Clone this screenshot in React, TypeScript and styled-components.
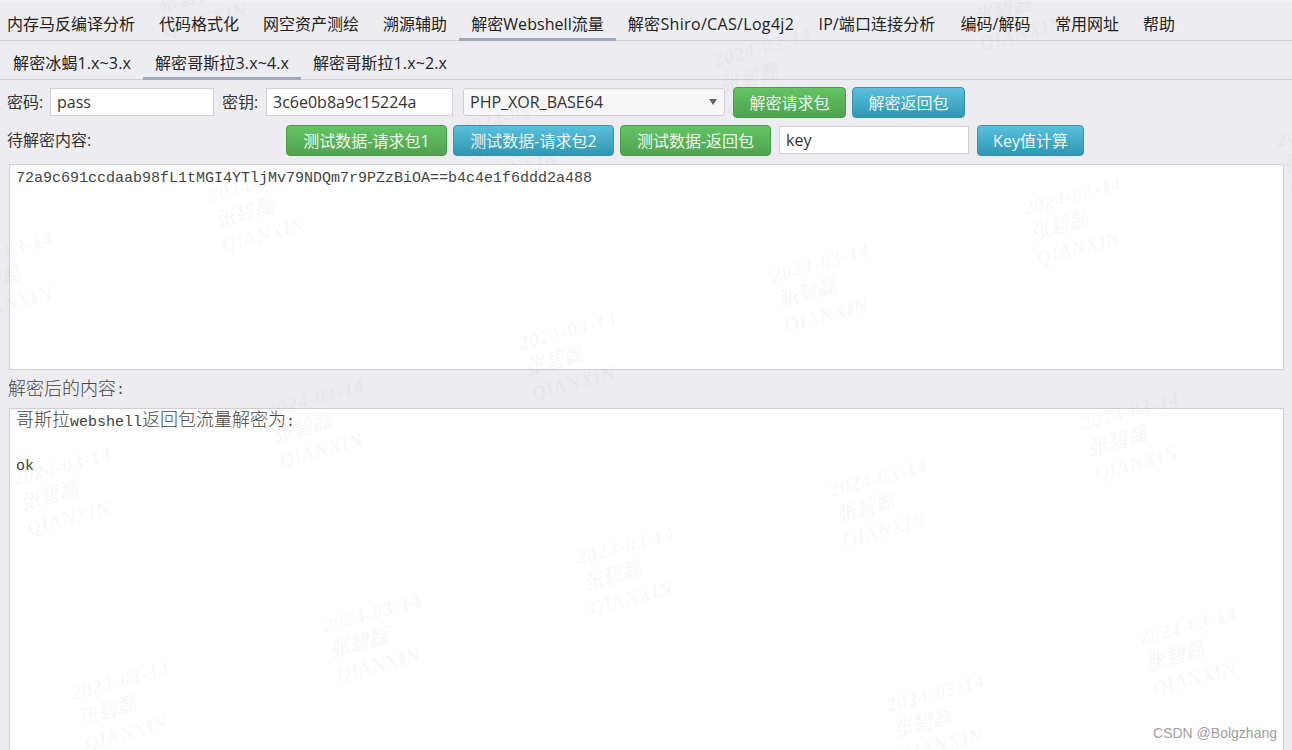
import React from "react";
import styled, { createGlobalStyle } from "styled-components";

const Global = createGlobalStyle`
  html, body { margin: 0; padding: 0; width: 1292px; height: 750px; overflow: hidden; background: #edecf1; }
  * { box-sizing: border-box; }
`;

const sans = `"Open Sans", "Noto Sans CJK SC", sans-serif`;
const mono = `"Liberation Mono", "Noto Sans CJK SC", monospace`;

const Page = styled.div`
  position: relative;
  width: 1292px;
  height: 750px;
  overflow: hidden;
  background: #edecf1;
  font-family: ${sans};
  color: #222;
  font-size: 16px;
`;

const TabBar = styled.div<{ $h: number; $pl: number }>`
  display: flex;
  height: ${(p) => p.$h}px;
  padding-left: ${(p) => p.$pl}px;
  border-bottom: 1px solid #cfcfd2;
`;
const MainBar = styled(TabBar)`
  border-top: 2px solid #f1f1f4;
`;

const Tab = styled.div<{ $active?: boolean; $w: number; $ls?: number; $pr?: number }>`
  width: ${(p) => p.$w}px;
  flex: none;
  display: flex;
  align-items: center;
  justify-content: center;
  padding: 5px ${(p) => p.$pr ?? 0}px 0 0;
  margin-bottom: -1px;
  white-space: nowrap;
  font-size: 16px;
  letter-spacing: ${(p) => p.$ls ?? 0}px;
  border-bottom: 3px solid ${(p) => (p.$active ? "#9eaabc" : "transparent")};
`;

const Content = styled.div`
  padding: 7px 8px 0 7px;
`;

const Row = styled.div`
  display: flex;
  align-items: flex-start;
  height: 31px;
`;
const SecondRow = styled(Row)`
  margin-top: 7px;
`;

const Label = styled.span<{ $w: number; $ml?: number }>`
  width: ${(p) => p.$w}px;
  margin-left: ${(p) => p.$ml ?? 0}px;
  flex: none;
  font-size: 16px;
  line-height: 30px;
  color: #333;
  white-space: nowrap;
`;

const Field = styled.div<{ $w: number; $ml?: number }>`
  width: ${(p) => p.$w}px;
  margin-left: ${(p) => p.$ml ?? 0}px;
  margin-top: 1px;
  height: 28px;
  flex: none;
  padding: 0 6px;
  display: flex;
  align-items: center;
  background: #fff;
  border: 1px solid #d0d0d2;
  font-size: 16px;
  color: #333;
`;

const Select = styled(Field)`
  background: #f6f6f7;
  border-radius: 3px;
  justify-content: space-between;
`;

const Caret = styled.span`
  width: 0;
  height: 0;
  border-left: 4.5px solid transparent;
  border-right: 4.5px solid transparent;
  border-top: 6px solid #666;
  margin-right: 1px;
`;

const Btn = styled.button<{ $kind: "green" | "blue"; $w: number; $ml?: number }>`
  width: ${(p) => p.$w}px;
  height: 31px;
  margin-left: ${(p) => p.$ml ?? 0}px;
  flex: none;
  padding: 0 0 2px;
  border-radius: 4px;
  font-family: ${sans};
  font-size: 16px;
  color: #eef8ef;
  white-space: nowrap;
  border: 1px solid ${(p) => (p.$kind === "green" ? "#4a9a4a" : "#3a90ad")};
  background: ${(p) =>
    p.$kind === "green"
      ? "linear-gradient(#62c462, #51a351)"
      : "linear-gradient(#5bc0de, #2f96b4)"};
`;

const Box = styled.div<{ $h: number; $mt: number }>`
  height: ${(p) => p.$h}px;
  margin: ${(p) => p.$mt}px 0 0 2px;
  padding: 3px 6px;
  background: #fff;
  border: 1px solid #cfcfd2;
  font-family: ${mono};
  font-size: 15px;
  line-height: 22px;
  color: #444;
  white-space: pre;
`;

const Cjk = styled.span`
  font-size: 18px;
  font-weight: 300;
  line-height: 0;
`;

const ResultLabel = styled.div`
  margin: 7px 0 0 1px;
  height: 26px;
  display: flex;
  align-items: center;
  font-family: ${mono};
  font-size: 15px;
  color: #444;
`;

const Mark = styled.div<{ $x: number; $y: number }>`
  position: absolute;
  left: ${(p) => p.$x}px;
  top: ${(p) => p.$y}px;
  transform: rotate(-15deg);
  transform-origin: left top;
  pointer-events: none;
  font-family: "Liberation Serif", "Noto Sans CJK SC", serif;
  font-style: italic;
  font-weight: 700;
  font-size: 20px;
  line-height: 26px;
  color: rgba(60, 60, 70, 0.05);
  white-space: nowrap;
`;
const MarkDate = styled.div`
  letter-spacing: 0.8px;
`;

const Credit = styled.div`
  position: absolute;
  right: 15px;
  bottom: 9px;
  font-family: "Liberation Sans", sans-serif;
  font-size: 14px;
  color: #a0a0a0;
`;

const mainTabs = [
  ["内存马反编译分析", 147, 0, 5], ["代码格式化", 104, 0, 0], ["网空资产测绘", 120, 0, 0], ["溯源辅助", 88, 0, 0],
  ["解密Webshell流量", 157, 0.05, 0], ["解密Shiro/CAS/Log4j2", 190, 0.33, 0], ["IP/端口连接分析", 142, 0.1, 0],
  ["编码/解码", 95, 0, 0], ["常用网址", 88, 0, 0], ["帮助", 56, 0, 0],
] as const;
const subTabs = [["解密冰蝎1.x~3.x", 142], ["解密哥斯拉3.x~4.x", 158], ["解密哥斯拉1.x~2.x", 158]] as const;

const marks: [number, number][] = [];
for (let a = -2; a < 6; a++) {
  for (let b = -2; b < 7; b++) {
    const x = 10 + a * 57.7 + b * 252.6;
    const y = 466 + a * 215 - b * 67.6;
    if (x > -120 && x < 1292 && y > -40 && y < 760) marks.push([Math.round(x), Math.round(y)]);
  }
}

export default function App() {
  return (
    <Page>
      <Global />
      <MainBar $h={41} $pl={0}>
        {mainTabs.map(([t, w, ls, pr]) => (
          <Tab key={t} $w={w} $ls={ls} $pr={pr} $active={t === "解密Webshell流量"}>{t}</Tab>
        ))}
      </MainBar>
      <TabBar $h={39} $pl={1}>
        {subTabs.map(([t, w]) => (
          <Tab key={t} $w={w} $ls={0.12} $active={t === "解密哥斯拉3.x~4.x"}>{t}</Tab>
        ))}
      </TabBar>
      <Content>
        <Row>
          <Label $w={43}>密码:</Label>
          <Field $w={164}>pass</Field>
          <Label $w={44} $ml={8}>密钥:</Label>
          <Field $w={187}>3c6e0b8a9c15224a</Field>
          <Select $w={262} $ml={10}>PHP_XOR_BASE64<Caret /></Select>
          <Btn $kind="green" $w={113} $ml={8}>解密请求包</Btn>
          <Btn $kind="blue" $w={113} $ml={6}>解密返回包</Btn>
        </Row>
        <SecondRow>
          <Label $w={279}>待解密内容:</Label>
          <Btn $kind="green" $w={161}>测试数据-请求包1</Btn>
          <Btn $kind="blue" $w={161} $ml={6}>测试数据-请求包2</Btn>
          <Btn $kind="green" $w={151} $ml={6}>测试数据-返回包</Btn>
          <Field $w={190} $ml={8}>key</Field>
          <Btn $kind="blue" $w={107} $ml={8}>Key值计算</Btn>
        </SecondRow>
        <Box $h={206} $mt={8}>72a9c691ccdaab98fL1tMGI4YTljMv79NDQm7r9PZzBiOA==b4c4e1f6ddd2a488</Box>
        <ResultLabel><Cjk>解密后的内容</Cjk>:</ResultLabel>
        <Box $h={360} $mt={5}>
          <Cjk>哥斯拉</Cjk>webshell<Cjk>返回包流量解密为</Cjk>:{"\n\n"}ok
        </Box>
      </Content>
      {marks.map(([x, y]) => (
        <Mark key={`${x}-${y}`} $x={x} $y={y}>
          <MarkDate>2024-03-14</MarkDate>
          <div>张碧磊</div>
          <div>QIANXIN</div>
        </Mark>
      ))}
      <Credit>CSDN @Bolgzhang</Credit>
    </Page>
  );
}
